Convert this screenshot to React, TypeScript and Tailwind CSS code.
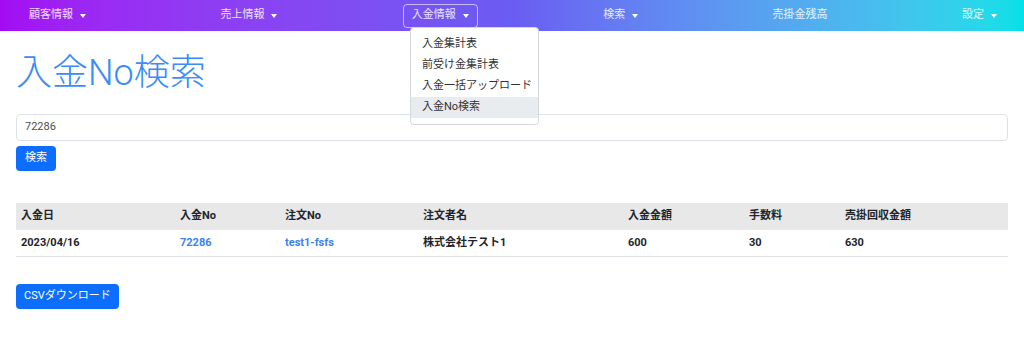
import React from "react";

const Caret = () => (
  <span className="ml-[7px] inline-block h-0 w-0 border-x-[3.5px] border-t-[4px] border-x-transparent border-t-white align-middle" />
);

export default function App() {
  const font = { fontFamily: 'Roboto, "Noto Sans CJK JP", sans-serif' };
  const navItems: { label: string; caret: boolean; active?: boolean }[] = [
    { label: "顧客情報", caret: true },
    { label: "売上情報", caret: true },
    { label: "入金情報", caret: true, active: true },
    { label: "検索", caret: true },
    { label: "売掛金残高", caret: false },
    { label: "設定", caret: true },
  ];
  const cols = [
    { h: "入金日", w: "w-[159px]" },
    { h: "入金No", w: "w-[105px]" },
    { h: "注文No", w: "w-[138px]" },
    { h: "注文者名", w: "w-[205px]" },
    { h: "入金金額", w: "w-[121px]" },
    { h: "手数料", w: "w-[96px]" },
    { h: "売掛回収金額", w: "flex-1" },
  ];
  const row = ["2023/04/16", "72286", "test1-fsfs", "株式会社テスト1", "600", "30", "630"];
  return (
    <div className="relative h-[338px] w-[1024px] bg-white text-[#212529]" style={font}>
      <nav className="flex h-[31px] items-center justify-between bg-gradient-to-r from-[#a30af2] via-[#6a5cf2] to-[#00e1e8] pl-[20px] pr-[18px] text-[11px] text-white/85">
        {navItems.map((n) => (
          <div
            key={n.label}
            className={`flex h-[24px] items-center rounded-[4px] px-[8px] ${n.active ? "border border-white/60" : "border border-transparent"}`}
          >
            <span>{n.label}</span>
            {n.caret && <Caret />}
          </div>
        ))}
      </nav>

      <div className="px-[16px]">
        <h1 className="mt-[18px] text-[36px] font-light leading-[48px] text-[#3b8cf7]">入金No検索</h1>
        <div className="mt-[17px] flex h-[27px] items-center rounded-[4px] border border-[#dee2e6] px-[8px] text-[11px] text-[#495057]">
          72286
        </div>
        <button className="mt-[5px] flex h-[25px] items-center rounded-[4px] bg-[#0d6efd] px-[9px] text-[11px] text-white">
          検索
        </button>

        <div className="mt-[32px] text-[11px] font-bold">
          <div className="flex h-[27px] items-center bg-[#e8e8e8]">
            {cols.map((c) => (
              <div key={c.h} className={`${c.w} px-[5px]`}>{c.h}</div>
            ))}
          </div>
          <div className="flex h-[27px] items-center border-b border-[#dee2e6]">
            {row.map((v, i) => (
              <div
                key={i}
                className={`${cols[i].w} px-[5px] ${i === 1 || i === 2 ? "text-[#3a82f0]" : ""}`}
              >
                {v}
              </div>
            ))}
          </div>
        </div>

        <button className="mt-[27px] flex h-[25px] items-center rounded-[4px] bg-[#0d6efd] px-[8px] text-[11px] text-white">
          CSVダウンロード
        </button>
      </div>

      <div className="absolute left-[410px] top-[27px] w-[129px] rounded-[4px] border border-[#d6d9dc] bg-white py-[6px] text-[11px] text-[#333]">
        {["入金集計表", "前受け金集計表", "入金一括アップロード", "入金No検索"].map((t, i) => (
          <div key={t} className={`flex h-[21px] items-center whitespace-nowrap px-[11px] ${i === 3 ? "bg-[#e9ecef]" : ""}`}>
            {t}
          </div>
        ))}
      </div>
    </div>
  );
}
